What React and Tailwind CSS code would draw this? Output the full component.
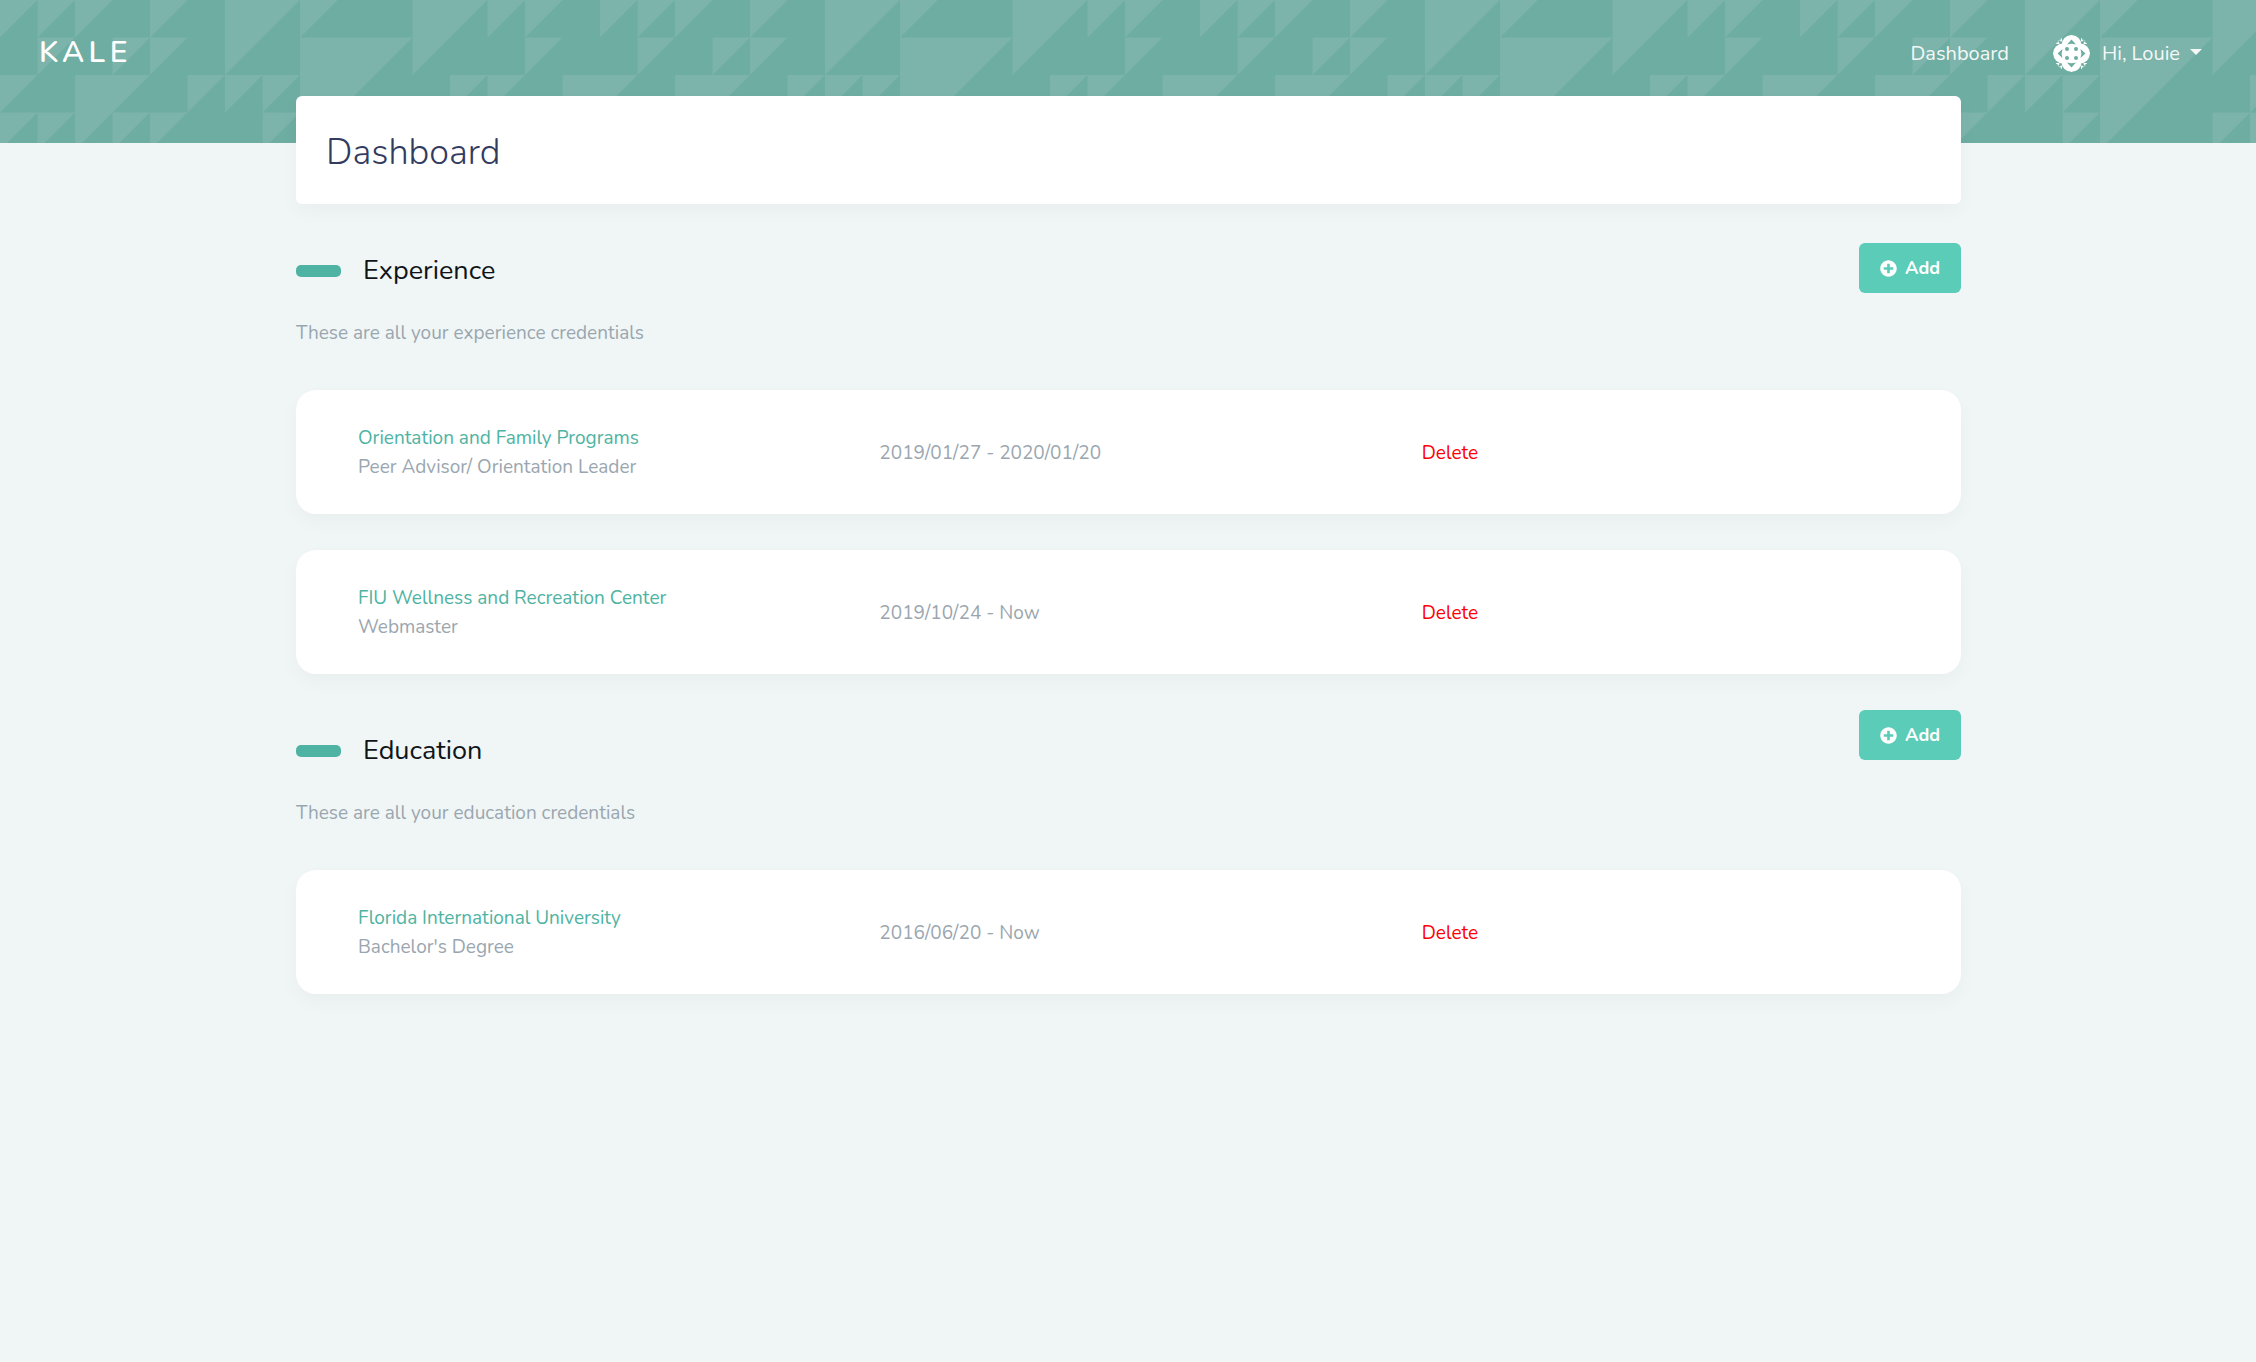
import { FaPlusCircle } from "react-icons/fa";

const CELL = 37.5;

// [column, row, size] of each half-square triangle in one 16-column tile
const TRIANGLES = [
  [0, 0, 1], [1, 0, 1], [2, 0, 1], [4, 0, 1], [6, 0, 2], [8, 0, 1], [11, 0, 2], [13, 0, 1], [14, 0, 1],
  [1, 1, 1], [3, 1, 1], [4, 1, 1], [8, 1, 3], [14, 1, 1],
  [-1, 2, 2], [15, 2, 2], [2, 2, 2], [5, 2, 1], [6, 2, 1], [7, 2, 1], [12, 2, 1], [13, 2, 1],
  [0, 3, 1], [1, 3, 1], [3, 3, 1], [4, 3, 1], [7, 3, 1], [11, 3, 1], [12, 3, 1],
];

const SECTIONS = [
  {
    title: "Experience",
    text: "These are all your experience credentials",
    offset: "pt-[9px]",
    items: [
      { name: "Orientation and Family Programs", role: "Peer Advisor/ Orientation Leader", dates: "2019/01/27 - 2020/01/20" },
      { name: "FIU Wellness and Recreation Center", role: "Webmaster", dates: "2019/10/24 - Now" },
    ],
  },
  {
    title: "Education",
    text: "These are all your education credentials",
    offset: "pt-[22px]",
    items: [
      { name: "Florida International University", role: "Bachelor's Degree", dates: "2016/06/20 - Now" },
    ],
  },
];

function HeaderPattern() {
  return (
    <svg className="absolute inset-0 h-full w-full" aria-hidden="true">
      <defs>
        <pattern id="triangles" width="600" height="150" patternUnits="userSpaceOnUse">
          {TRIANGLES.map(([c, r, s]) => (
            <path
              key={`${c}-${r}`}
              d={`M${c * CELL} ${r * CELL}h${s * CELL}l${-s * CELL} ${s * CELL}z`}
              fill="#7cb4ab"
            />
          ))}
        </pattern>
      </defs>
      <rect width="100%" height="100%" fill="url(#triangles)" />
    </svg>
  );
}

function Avatar() {
  return (
    <svg viewBox="0 0 37 37" className="size-[37px]" aria-hidden="true">
      <clipPath id="avatar-clip">
        <circle cx="18.5" cy="18.5" r="18.5" />
      </clipPath>
      <g clipPath="url(#avatar-clip)">
        <g fill="#fff">
          <circle cx="18.5" cy="10" r="10" />
          <circle cx="18.5" cy="27" r="10" />
          <circle cx="10" cy="18.5" r="10" />
          <circle cx="27" cy="18.5" r="10" />
        </g>
        {[0, 90, 180, 270].map((a) => (
          <g key={a} transform={`rotate(${a} 18.5 18.5)`}>
            <path d="M18.5 4.500l4.500 5q-4.500-1.600-9 0z" fill="#6eada2" />
            <circle cx="14" cy="14" r="2" fill="#6eada2" />
            <path d="M9 2v4.500L6.800 6zM2 9h4.500L6 6.800zM3.500 7.500L7.500 3.500 6 6z" fill="#fff" />
          </g>
        ))}
      </g>
    </svg>
  );
}

function Header() {
  return (
    <header className="relative h-[143px] bg-[#6eada2]">
      <HeaderPattern />
      <nav className="relative flex h-[106px] items-center justify-between pr-[54px] pl-[39px] text-[20px] text-[#f4f8f7]">
        <a href="#home" className="text-[30px] leading-9 font-semibold tracking-[0.15em] text-white">KALE</a>
        <div className="flex items-center">
          <a href="#dashboard" className="mr-11">Dashboard</a>
          <button type="button" className="flex items-center">
            <Avatar />
            <span className="ml-3">Hi, Louie</span>
            <svg viewBox="0 0 12 6" className="mb-[2px] ml-[10px] h-[6px] w-[12px]" aria-hidden="true">
              <path d="M0 0h12L6 6z" fill="currentColor" />
            </svg>
          </button>
        </div>
      </nav>
    </header>
  );
}

function Credential({ item }) {
  return (
    <li className="grid grid-cols-[521fr_542fr_477fr] items-center rounded-[20px] bg-white px-[62px] pt-[34px] pb-8 shadow-[0_8px_20px_rgba(0,40,30,0.03)]">
      <div>
        <a href="#credential" className="text-[#4eb3a2]">{item.name}</a>
        <p>{item.role}</p>
      </div>
      <p>{item.dates}</p>
      <button type="button" className="justify-self-start text-[#ff0000]">Delete</button>
    </li>
  );
}

function Section({ section }) {
  return (
    <section>
      <div className="flex items-start justify-between">
        <div className={section.offset}>
          <h2 className="flex items-center gap-[22px] text-[27px] leading-[38px] text-[#0f1419]">
            <span className="h-3 w-[45px] rounded-[5px] bg-[#4eb3a2]" />
            {section.title}
          </h2>
          <p className="mt-[29px]">{section.text}</p>
        </div>
        <button
          type="button"
          className="flex h-[50px] items-center gap-2 rounded-md bg-[#5accb8] px-[21px] text-lg font-bold text-white"
        >
          <FaPlusCircle className="size-[17px]" />
          Add
        </button>
      </div>
      <ul className="mt-[42px] flex flex-col gap-9">
        {section.items.map((item) => (
          <Credential key={item.name} item={item} />
        ))}
      </ul>
    </section>
  );
}

export default function App() {
  return (
    <div className="min-h-screen bg-[#f0f6f6] font-['Nunito','Lato',sans-serif] text-[19px] leading-[29px] text-[#9aa6af]">
      <Header />
      <main className="relative mr-[295px] ml-[296px] -mt-[47px] pb-16">
        <h1 className="rounded-md bg-white px-[30px] pt-[35px] pb-[29px] text-[36px] leading-[44px] font-light text-[#333b5f] shadow-[0_8px_20px_rgba(0,40,30,0.03)]">
          Dashboard
        </h1>
        <div className="mt-[39px] flex flex-col gap-9">
          {SECTIONS.map((section) => (
            <Section key={section.title} section={section} />
          ))}
        </div>
      </main>
    </div>
  );
}
